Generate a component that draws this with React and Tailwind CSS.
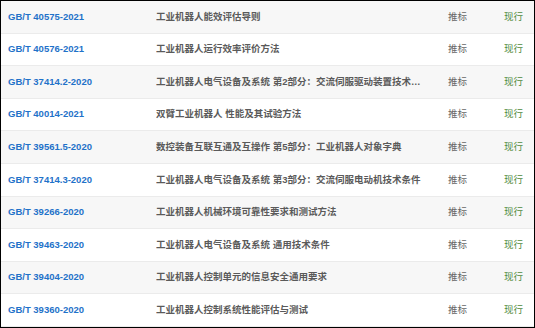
import React from 'react';

const standards = [
  { code: 'GB/T 40575-2021', title: '工业机器人能效评估导则' },
  { code: 'GB/T 40576-2021', title: '工业机器人运行效率评价方法' },
  { code: 'GB/T 37414.2-2020', title: '工业机器人电气设备及系统 第2部分：交流伺服驱动装置技术条件' },
  { code: 'GB/T 40014-2021', title: '双臂工业机器人 性能及其试验方法' },
  { code: 'GB/T 39561.5-2020', title: '数控装备互联互通及互操作 第5部分：工业机器人对象字典' },
  { code: 'GB/T 37414.3-2020', title: '工业机器人电气设备及系统 第3部分：交流伺服电动机技术条件' },
  { code: 'GB/T 39266-2020', title: '工业机器人机械环境可靠性要求和测试方法' },
  { code: 'GB/T 39463-2020', title: '工业机器人电气设备及系统 通用技术条件' },
  { code: 'GB/T 39404-2020', title: '工业机器人控制单元的信息安全通用要求' },
  { code: 'GB/T 39360-2020', title: '工业机器人控制系统性能评估与测试' },
];

const App = () => {
  return (
    <div className="w-[535px] h-[328px] bg-white border border-black overflow-hidden font-['Liberation_Sans','Noto_Sans_CJK_SC',sans-serif] text-[9.5px]">
      {standards.map((s, i) => (
        <div
          key={s.code}
          className={`grid grid-cols-[155px_292px_56px_1fr] items-center h-[32.6px] border-b border-[#ebebeb] ${i % 2 === 0 ? 'bg-[#f7f7f7]' : 'bg-white'}`}
        >
          <div className="pl-[7px] font-bold text-[#1f72c9]">{s.code}</div>
          <div className="max-w-[268px] truncate font-bold text-[#5a5a5a]">{s.title}</div>
          <div className="text-[#666]">推标</div>
          <div className="text-[#4f8a3c]">现行</div>
        </div>
      ))}
    </div>
  );
};

export default App;
